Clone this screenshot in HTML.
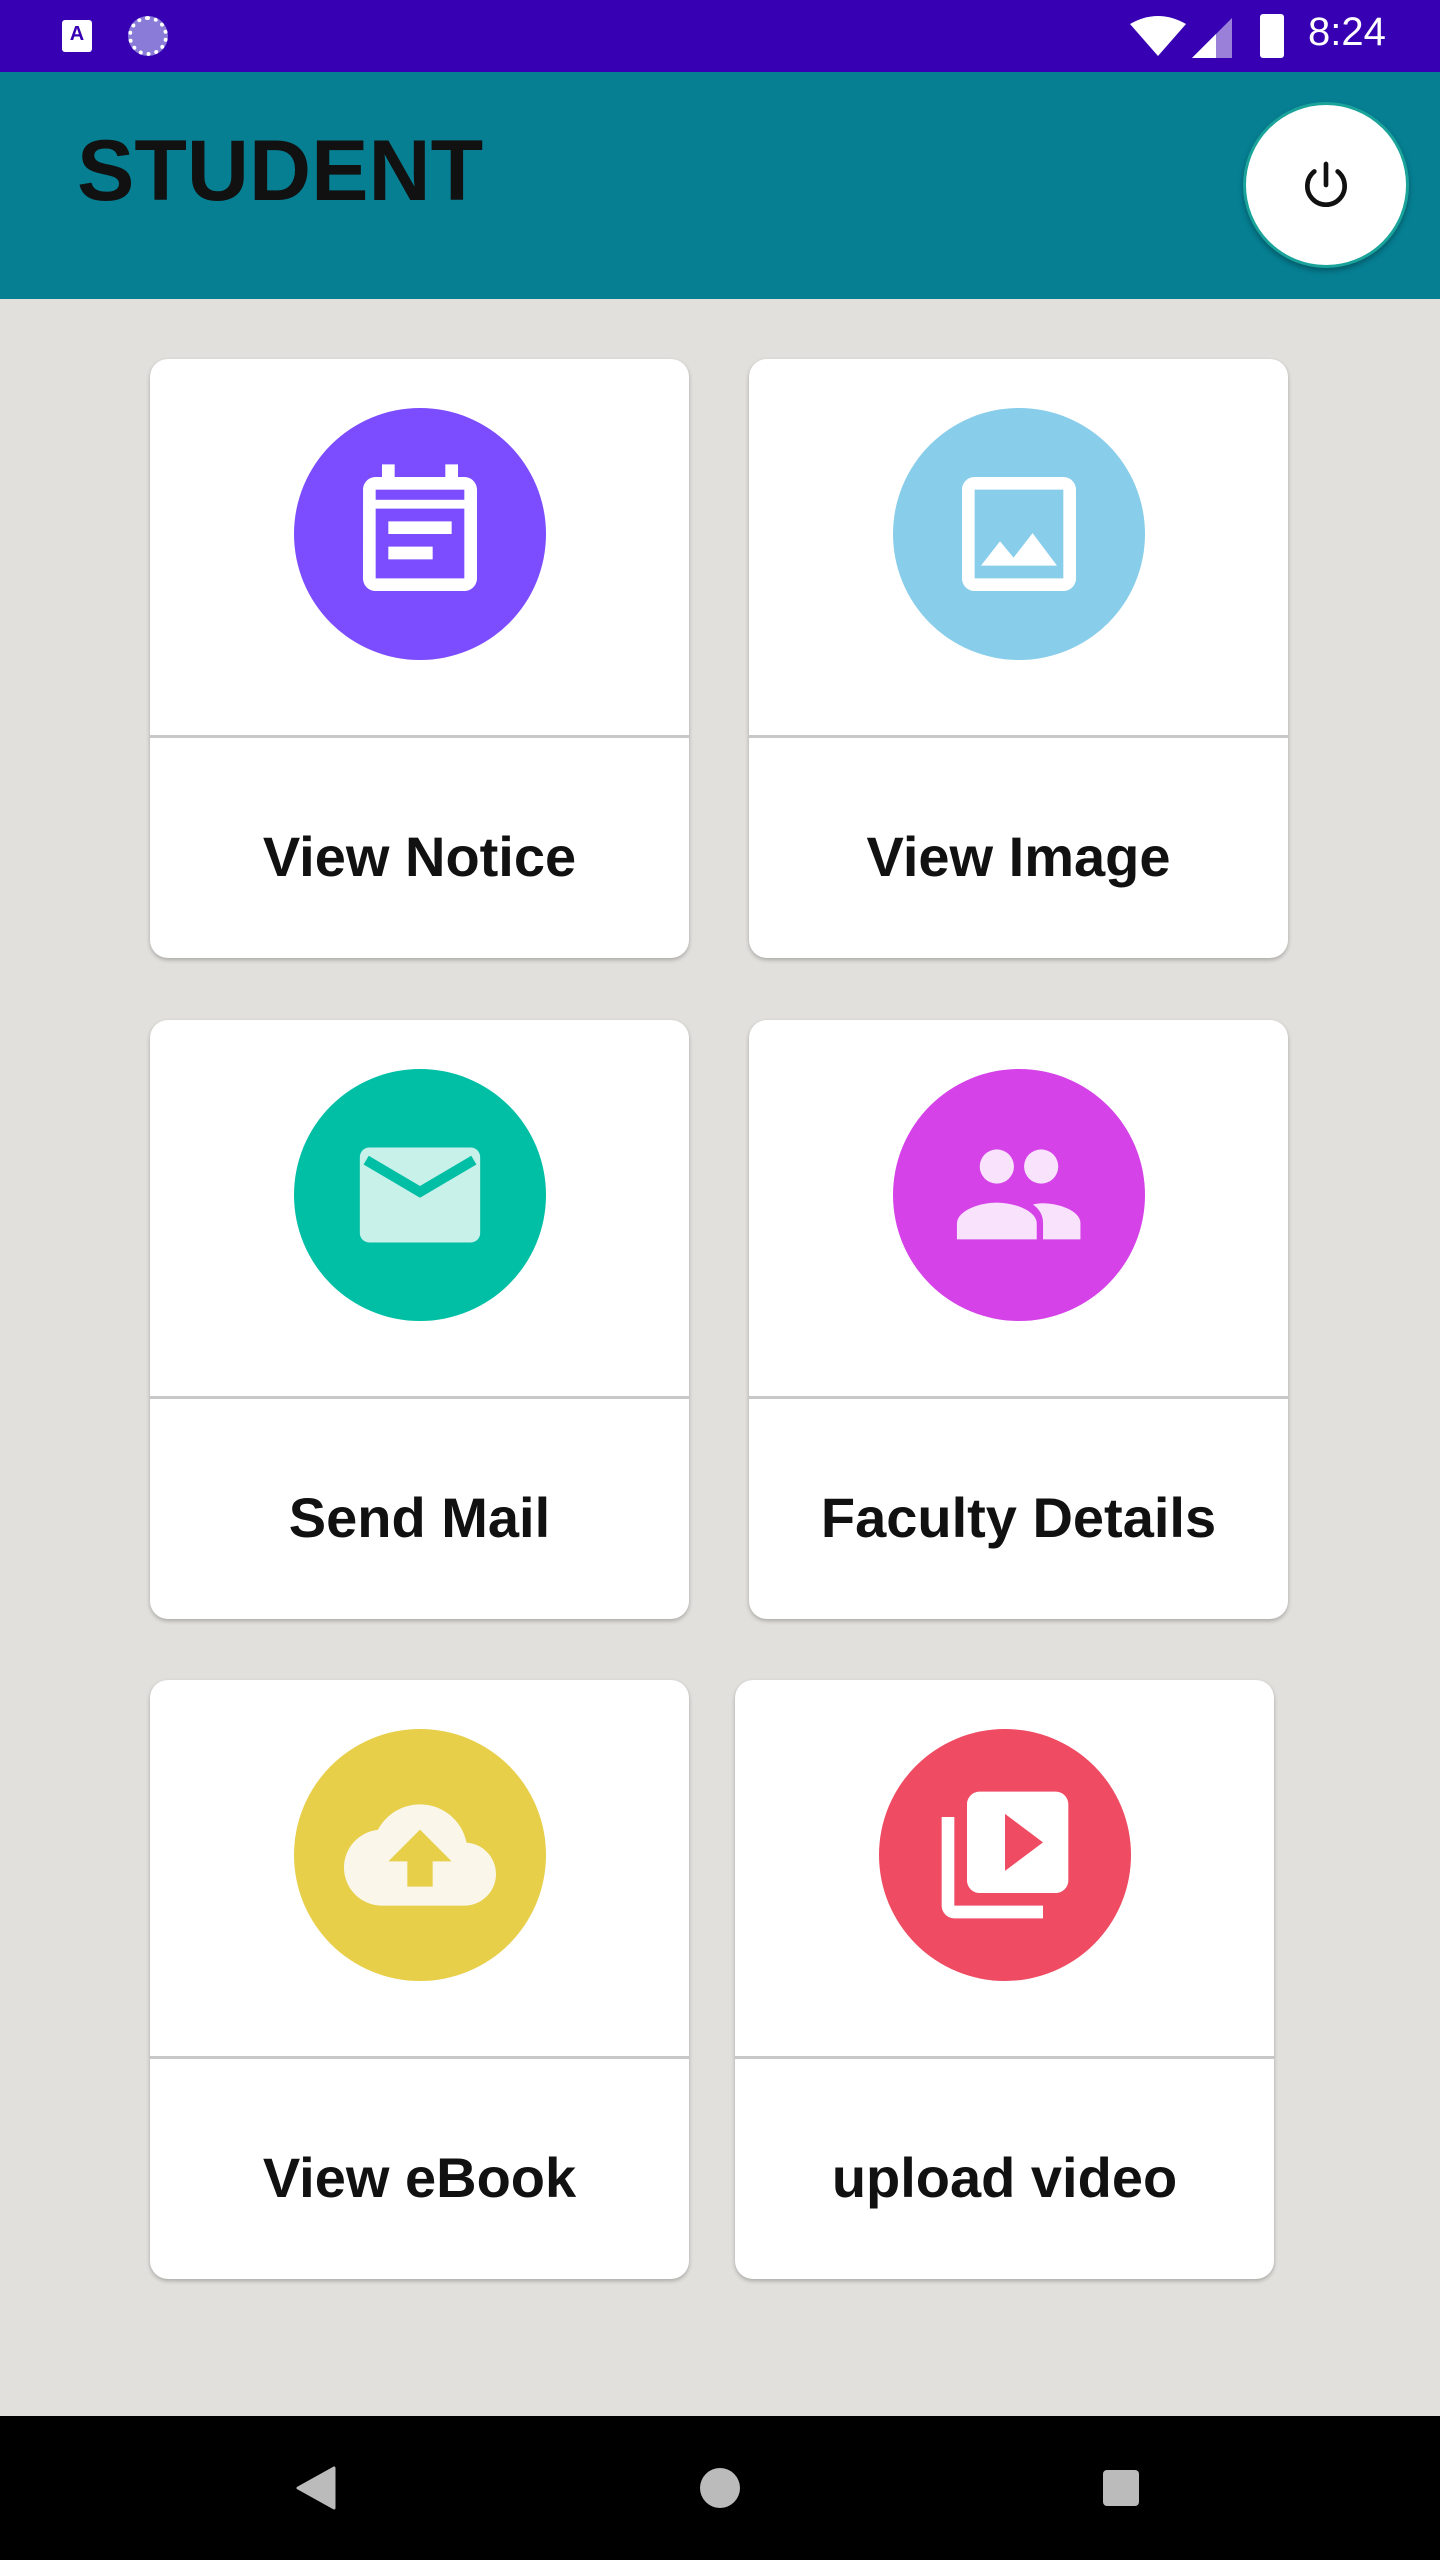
<!DOCTYPE html>
<html><head><meta charset="utf-8"><style>
*{margin:0;padding:0;box-sizing:border-box}
body{width:1440px;height:2560px;background:#e2e0dc;position:relative;overflow:hidden;font-family:"Liberation Sans",sans-serif}
.sb{position:absolute;left:0;top:0;width:1440px;height:72px;background:#3700b3}
.tb{position:absolute;left:0;top:72px;width:1440px;height:227px;background:#067f93}
.title{position:absolute;left:77px;top:122px;font-size:86px;font-weight:bold;color:#111;letter-spacing:0px}
.pw{position:absolute;left:1243px;top:102px;width:166px;height:166px;border-radius:50%;background:#fff;border:3px solid #1aa39a;box-shadow:0 3px 6px rgba(0,0,0,.3)}
.card{position:absolute;width:539px;height:599px;background:#fff;border-radius:18px;box-shadow:0 2px 4px rgba(0,0,0,.25);overflow:hidden}
.card .div{position:absolute;left:0;top:376px;width:100%;height:3px;background:#c8c8c8}
.card .c{position:absolute;left:144px;top:49px;width:252px;height:252px;border-radius:50%}
.card .c svg{position:absolute;left:50px;top:50px;width:152px;height:152px}
.card .t{position:absolute;left:0;top:395px;width:100%;height:220px;line-height:206px;text-align:center;font-size:56px;font-weight:bold;color:#111}
.nav{position:absolute;left:0;top:2416px;width:1440px;height:144px;background:#000}
</style></head><body>
<div class="sb">
 <div style="position:absolute;left:62px;top:20px;width:30px;height:32px;background:#fff;border-radius:3px;color:#3700b3;font-size:20px;font-weight:bold;text-align:center;line-height:28px">A</div>
 <div style="position:absolute;left:128px;top:16px;width:40px;height:40px;border-radius:50%;border:4px dotted #fff;background:#8a7bd8"></div>
 <svg style="position:absolute;left:1130px;top:14px" width="110" height="46" viewBox="0 0 110 46"><path d="M0 10 Q28 -6 56 10 L28 42 Z" fill="#fff"/><path d="M62 44 L102 4 L102 44 Z" fill="#fff" opacity=".5"/><path d="M62 44 L86 20 L86 44 Z" fill="#fff"/></svg>
 <div style="position:absolute;left:1260px;top:14px;width:24px;height:44px;background:#fff;border-radius:3px"></div>
 <div style="position:absolute;left:1308px;top:10px;color:#fff;font-size:40px">8:24</div>
</div>
<div class="tb"></div>
<div class="title">STUDENT</div>
<div class="pw"><svg style="position:absolute;left:52px;top:52px" width="56" height="56" viewBox="0 0 24 24"><path d="M12 3v9" stroke="#111" stroke-width="2" stroke-linecap="round" fill="none"/><path d="M7 6.2A8 8 0 1 0 17 6.2" stroke="#111" stroke-width="2" fill="none" stroke-linecap="round"/></svg></div>

<div class="card" style="left:150px;top:359px"><div class="c" style="background:#7c4dff"><svg viewBox="0 0 24 24"><path fill="#fff" d="M17 10H7v2h10v-2zm2-7h-1V1h-2v2H8V1H6v2H5c-1.11 0-1.99.9-1.99 2L3 19c0 1.1.89 2 2 2h14c1.1 0 2-.9 2-2V5c0-1.1-.9-2-2-2zm0 16H5V8h14v11zm-5-5H7v2h7v-2z"/><rect x="5" y="5" width="14" height="1.6" fill="#7c4dff"/></svg></div><div class="div"></div><div class="t">View Notice</div></div>
<div class="card" style="left:749px;top:359px"><div class="c" style="background:#88cdea"><svg viewBox="0 0 24 24"><path fill="#fff" d="M19 3H5c-1.1 0-2 .9-2 2v14c0 1.1.9 2 2 2h14c1.1 0 2-.9 2-2V5c0-1.1-.9-2-2-2zm0 16H5V5h14v14zm-4.86-7.14l-3 3.87L9 13.14 6 17h12l-3.86-5.14z"/></svg></div><div class="div"></div><div class="t">View Image</div></div>

<div class="card" style="left:150px;top:1020px"><div class="c" style="background:#00bfa5"><svg viewBox="0 0 24 24"><rect x="2.5" y="4.5" width="19" height="15" rx="1.5" fill="#c8f1ea"/><path d="M3.5 6.5l8.5 5L20.5 6.5" stroke="#00bfa5" stroke-width="1.6" fill="none"/></svg></div><div class="div"></div><div class="t">Send Mail</div></div>
<div class="card" style="left:749px;top:1020px"><div class="c" style="background:#d442e8"><svg viewBox="0 0 24 24"><circle cx="8.5" cy="7.5" r="2.7" fill="#f9e3fc"/><circle cx="15.5" cy="7.5" r="2.7" fill="#f9e3fc"/><path d="M2.2 19v-2.5c0-2 3.5-3.3 6.3-3.3s6.3 1.3 6.3 3.3V19z" fill="#f9e3fc"/><path d="M15.8 19v-2.6c0-1.2-.6-2.2-1.6-2.9.5-.1 1-.2 1.5-.2 2.6 0 6 1.2 6 3.1V19z" fill="#f9e3fc"/></svg></div><div class="div"></div><div class="t">Faculty Details</div></div>

<div class="card" style="left:150px;top:1680px"><div class="c" style="background:#e8cf4a"><svg viewBox="0 0 24 24"><path fill="#faf7ea" d="M19.35 10.04C18.67 6.59 15.64 4 12 4 9.11 4 6.6 5.64 5.35 8.04 2.34 8.36 0 10.91 0 14c0 3.31 2.69 6 6 6h13c2.76 0 5-2.24 5-5 0-2.64-2.05-4.78-4.65-4.96z"/><path fill="#e8cf4a" d="M14 13v4h-4v-4H7l5-5 5 5h-3z"/></svg></div><div class="div"></div><div class="t">View eBook</div></div>
<div class="card" style="left:735px;top:1680px"><div class="c" style="background:#ef4b63"><svg viewBox="0 0 24 24"><path fill="#fff" d="M4 6H2v14c0 1.1.9 2 2 2h14v-2H4V6zm16-4H8c-1.1 0-2 .9-2 2v12c0 1.1.9 2 2 2h12c1.1 0 2-.9 2-2V4c0-1.1-.9-2-2-2zm-8 12.5v-9l6 4.5-6 4.5z"/></svg></div><div class="div"></div><div class="t">upload video</div></div>

<div class="nav">
 <svg style="position:absolute;left:296px;top:50px" width="40" height="44" viewBox="0 0 40 44"><path d="M38 2 L38 42 L2 22 Z" fill="#bbb" stroke="#bbb" stroke-width="3" stroke-linejoin="round"/></svg>
 <div style="position:absolute;left:700px;top:52px;width:40px;height:40px;border-radius:50%;background:#bbb"></div>
 <div style="position:absolute;left:1103px;top:54px;width:36px;height:36px;border-radius:4px;background:#bbb"></div>
</div>
</body></html>
